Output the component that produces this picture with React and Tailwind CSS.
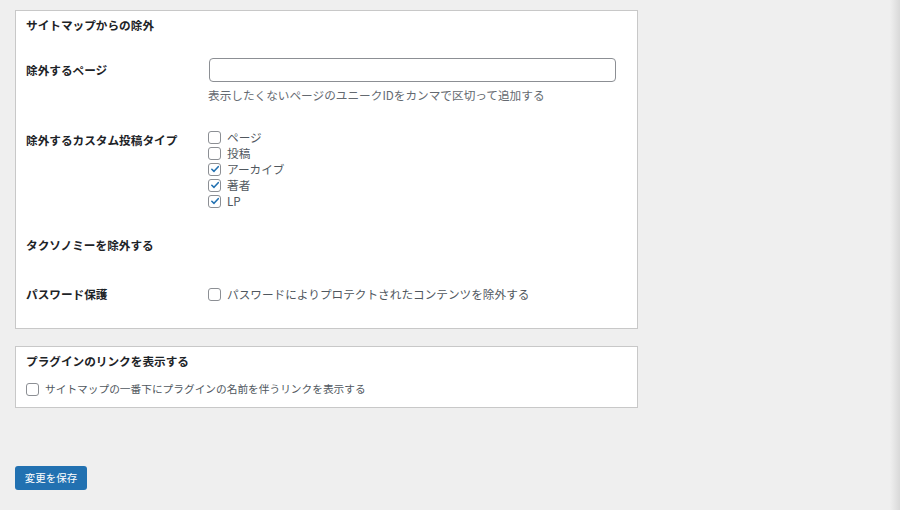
const FONT = { fontFamily: '"Noto Sans CJK JP", "Noto Sans", sans-serif' };

const POST_TYPES = [
  { label: 'ページ', checked: false },
  { label: '投稿', checked: false },
  { label: 'アーカイブ', checked: true },
  { label: '著者', checked: true },
  { label: 'LP', checked: true },
];

function Checkbox({ checked }) {
  return (
    <span className="flex items-center justify-center w-[13px] h-[13px] rounded-[3px] border border-[#8c8f94] bg-white shrink-0">
      {checked && (
        <svg viewBox="0 0 12 12" className="w-[10px] h-[10px]">
          <path d="M2.2 6.3 L4.8 8.8 L9.9 3.2" fill="none" stroke="#2271b1" strokeWidth="1.9" strokeLinecap="round" strokeLinejoin="round" />
        </svg>
      )}
    </span>
  );
}

function Row({ label, top, labelPad, children }) {
  return (
    <div className="flex" style={{ marginTop: top }}>
      <div className="w-[182px] shrink-0 font-bold text-[#1d2327] leading-[14px]" style={{ paddingTop: labelPad }}>
        {label}
      </div>
      <div className="flex-1">{children}</div>
    </div>
  );
}

export default function App() {
  return (
    <div className="w-[900px] h-[510px] flex bg-[#efefef] text-[11.65px]" style={FONT}>
      <div className="flex-1 pl-[15px] pt-[10px]">
        <div className="w-[623px] border border-[#c8c8c8] bg-white pl-[10px] pt-[7px] pb-[27px]">
          <h2 className="font-bold text-[#1d2327] leading-[14px]">サイトマップからの除外</h2>

          <Row label="除外するページ" top="26px" labelPad="5px">
            <input
              type="text"
              className="block ml-px w-[407px] h-[24px] rounded-[4px] border border-[#8c8f94] bg-white px-2 outline-none"
            />
            <p className="mt-[6px] leading-[14px] text-[#646970]">
              表示したくないページのユニークIDをカンマで区切って追加する
            </p>
          </Row>

          <Row label="除外するカスタム投稿タイプ" top="27px" labelPad="4px">
            <div className="flex flex-col">
              {POST_TYPES.map((t) => (
                <label key={t.label} className="flex items-center gap-[6px] h-[16px] text-[#50575e]">
                  <Checkbox checked={t.checked} />
                  <span className="leading-[14px]">{t.label}</span>
                </label>
              ))}
            </div>
          </Row>

          <Row label="タクソノミーを除外する" top="29px" labelPad="0px" />

          <Row label="パスワード保護" top="35px" labelPad="0px">
            <label className="flex items-center gap-[6px] h-[14px] text-[#50575e]">
              <Checkbox />
              <span className="leading-[14px]">パスワードによりプロテクトされたコンテンツを除外する</span>
            </label>
          </Row>
        </div>

        <div className="mt-[17px] w-[623px] border border-[#c8c8c8] bg-white pl-[10px] pt-[7px] pb-[11px]">
          <h2 className="font-bold text-[#1d2327] leading-[14px]">プラグインのリンクを表示する</h2>
          <label className="mt-[14px] flex items-center gap-[6px] h-[14px] text-[10.7px] text-[#50575e]">
            <Checkbox />
            <span className="leading-[14px]">サイトマップの一番下にプラグインの名前を伴うリンクを表示する</span>
          </label>
        </div>

        <button
          type="button"
          className="mt-[58px] w-[72px] h-[24px] rounded-[3px] bg-[#2271b1] text-white text-[10.5px] leading-none"
        >
          変更を保存
        </button>
      </div>
      <div className="w-[10px] bg-gradient-to-r from-[#efefef] to-[#d9d9d9]" />
    </div>
  );
}
